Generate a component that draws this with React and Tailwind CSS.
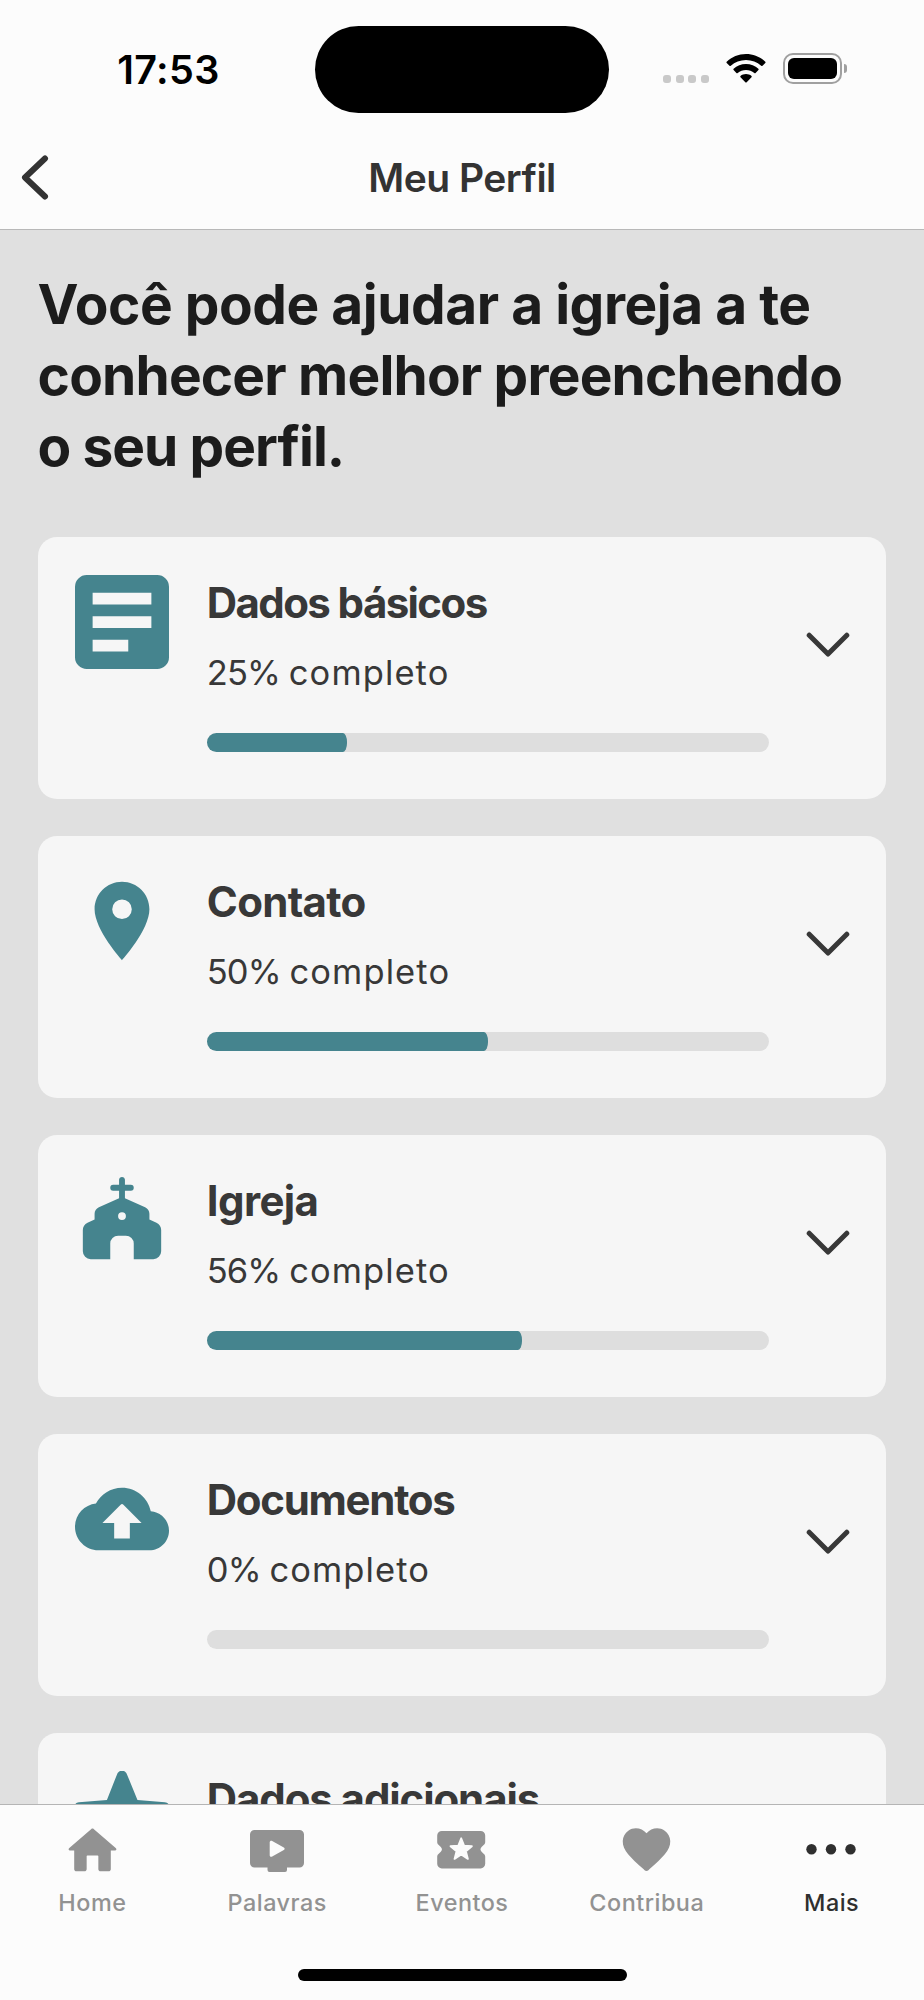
import React from "react";

const ArticleIcon = () => (
  <svg viewBox="0 0 24 24" className="w-[94px] h-[94px]" fill="currentColor">
    <path
      fillRule="evenodd"
      d="M3 0h18a3 3 0 0 1 3 3v18a3 3 0 0 1-3 3H3a3 3 0 0 1-3-3V3a3 3 0 0 1 3-3zM4.5 4.5v3h15v-3zM4.5 10.5v3h15v-3zM4.5 16.5v3h9.1v-3z"
    />
  </svg>
);

const PinIcon = () => (
  <svg viewBox="0 0 24 24" className="w-[94px] h-[94px]" fill="currentColor">
    <path d="M12 2C8.13 2 5 5.13 5 9c0 5.25 7 13 7 13s7-7.75 7-13c0-3.87-3.13-7-7-7zm0 9.5a2.5 2.5 0 0 1 0-5 2.5 2.5 0 0 1 0 5z" />
  </svg>
);

const ChurchIcon = () => (
  <svg viewBox="0 0 24 24" className="w-[94px] h-[94px]" fill="currentColor">
    <path
      fillRule="evenodd"
      d="M12 1c.42 0 .75.33.75.75V3h1.5a.75.75 0 0 1 0 1.5h-1.5v1.95l5.15 2.3c.7.32 1.1.93 1.1 1.65v1.5l1.8.82c.75.33 1.2 1.05 1.2 1.83V20a2 2 0 0 1-2 2h-5v-4a2 2 0 0 0-2-2h-2a2 2 0 0 0-2 2v4H4a2 2 0 0 1-2-2v-5.45c0-.78.45-1.5 1.2-1.83l1.8-.82v-1.5c0-.72.4-1.33 1.1-1.65l5.15-2.3V4.5h-1.5a.75.75 0 0 1 0-1.5h1.5V1.75c0-.42.33-.75.75-.75zM12 10a1 1 0 1 0 0 2 1 1 0 0 0 0-2z"
    />
  </svg>
);

const CloudIcon = () => (
  <svg viewBox="0 0 24 24" className="w-[94px] h-[94px]" fill="currentColor">
    <path d="M19.35 10.04C18.67 6.59 15.64 4 12 4 9.11 4 6.6 5.64 5.35 8.04 2.34 8.36 0 10.91 0 14c0 3.31 2.69 6 6 6h13c2.76 0 5-2.24 5-5 0-2.64-2.05-4.78-4.65-4.96zM14 13v4h-4v-4H7l4.65-4.65c.2-.2.51-.2.71 0L17 13h-3z" />
  </svg>
);

const StarIcon = () => (
  <svg viewBox="0 0 24 24" className="w-[94px] h-[94px]" fill="currentColor">
    <path d="M10.75.8c.5-1.2 2-1.2 2.5 0L15.95 7.4l7 .6c1.2.1 1.7 1.6.8 2.4l-5.4 4.7 1.6 7c.3 1.2-1 2.1-2 1.5L12 19.9l-6 3.7c-1 .6-2.3-.3-2-1.5l1.6-7-5.4-4.7c-.9-.8-.4-2.3.8-2.4l7.15-.6z" />
  </svg>
);

const HomeIcon = () => (
  <svg viewBox="0 0 24 24" className="w-[61px] h-[61px]" fill="currentColor">
    <path d="M9.7 19.4v-5.100c0-.2.1-.3.3-.3h4c.2 0 .3.1.3.3v5.1c0 .5.4.8.9.8h3.1c.5 0 .9-.3.9-.8V12h1.7c.46 0 .68-.57.33-.87L12.45 3.500c-.25-.24-.65-.24-.9 0L2.770 11.130c-.34.3-.13.87.33.87H4.800v7.400c0 .5.4.8.9.8h3.100c.5 0 .9-.3.9-.8z" />
  </svg>
);

const VideoIcon = () => (
  <svg viewBox="0.5 0 61 61" className="w-[61px] h-[61px]" fill="currentColor">
    <path
      fillRule="evenodd"
      d="M8 10h45a4.500 4.500 0 0 1 4.500 4.500v28.500a4.500 4.500 0 0 1-4.500 4.500H40.500v2.500a2 2 0 0 1-2 2H23a2 2 0 0 1-2-2v-2.500H8a4.500 4.500 0 0 1-4.500-4.500V14.500A4.500 4.500 0 0 1 8 10zM23.200 22.300v12.900c0 1.300 1.400 2 2.500 1.300l11.600-6.500c1.100-.7 1.100-1.900 0-2.500l-11.600-6.500c-1.100-.7-2.500 0-2.500 1.300z"
    />
  </svg>
);

const TicketIcon = () => (
  <svg viewBox="0 0 61 61" className="w-[61px] h-[61px]" fill="currentColor">
    <path d="M10.8 11h38.8a4.6 4.6 0 0 1 4.6 4.6v6.400c0 1.200-.4 2-1.300 2.800l-2.300 2.200c-1.500 1.600-1.500 3.200 0 4.800l2.300 2.200c.9.8 1.300 1.600 1.300 2.800v7a4.600 4.600 0 0 1-4.600 4.600H10.800a4.600 4.600 0 0 1-4.600-4.600v-7c0-1.200.4-2 1.300-2.800l2.300-2.200c1.500-1.600 1.500-3.200 0-4.800l-2.300-2.200c-.9-.8-1.300-1.600-1.300-2.800v-6.400a4.600 4.600 0 0 1 4.600-4.600z" />
    <path
      d="M30.200 18.300l2.900 7.400 7.800.5-6 5 2 7.700-6.700-4.300-6.700 4.300 2-7.700-6-5 7.800-.5z"
      fill="#fcfcfc"
      stroke="#fcfcfc"
      strokeWidth="1.800"
      strokeLinejoin="round"
    />
  </svg>
);

const HeartIcon = () => (
  <svg viewBox="0 0 24 24" className="w-[57px] h-[57px] mt-[1px]" fill="currentColor">
    <path d="M12.8 20.7c-.46.4-1.14.4-1.600 0l-.5-.5C5.300 15.400 1.870 12.260 2 8.380c.06-1.700.93-3.330 2.340-4.290 2.640-1.800 5.900-.96 7.660 1.100 1.760-2.060 5.020-2.910 7.660-1.100 1.410.96 2.280 2.590 2.340 4.290.14 3.880-3.300 6.990-8.700 11.820z" />
  </svg>
);

const MoreIcon = () => (
  <svg viewBox="0 0 61 61" className="w-[61px] h-[61px]" fill="currentColor">
    <circle cx="10.5" cy="29.3" r="5.2" />
    <circle cx="30" cy="29.3" r="5.2" />
    <circle cx="49.5" cy="29.3" r="5.2" />
  </svg>
);

const sections = [
  { title: "Dados básicos", percent: 25, icon: ArticleIcon, tracking: "tracking-[-1.6px]" },
  { title: "Contato", percent: 50, icon: PinIcon, tracking: "tracking-[-0.7px]" },
  { title: "Igreja", percent: 56, icon: ChurchIcon, tracking: "tracking-[-0.6px]" },
  { title: "Documentos", percent: 0, icon: CloudIcon, tracking: "tracking-[-1.3px]" },
  { title: "Dados adicionais", percent: 0, icon: StarIcon, tracking: "tracking-[-1.1px]" },
];

const tabs = [
  { label: "Home", icon: HomeIcon },
  { label: "Palavras", icon: VideoIcon },
  { label: "Eventos", icon: TicketIcon },
  { label: "Contribua", icon: HeartIcon },
  { label: "Mais", icon: MoreIcon, active: true },
];

function StatusBar() {
  return (
    <div className="h-[129px] flex items-start text-black">
      <div className="w-[315px] shrink-0 pt-[45px] pl-[22px] text-center text-[39.5px] leading-[50px] tracking-[0.4px] font-semibold">
        17:53
      </div>
      <div className="w-[294px] h-[87px] mt-[26px] shrink-0 rounded-full bg-black" />
      <div className="flex items-start pt-[53px] pl-[54px]">
        <div className="flex gap-[4.6px] mt-[22px]">
          {[0, 1, 2, 3].map((i) => (
            <span key={i} className="w-[8px] h-[8px] rounded-[3px] bg-[#c9c9c9]" />
          ))}
        </div>
        <svg viewBox="0 0 40 30" className="w-[40px] h-[30px] ml-[17px] mt-[1px]" fill="currentColor">
          <path d="M20 0c7.5 0 14.2 2.9 19.3 7.7.4.4.4.9 0 1.3l-2.8 2.8c-.4.4-.9.4-1.3 0C31.1 8.1 25.8 6 20 6S8.9 8.1 4.8 11.8c-.4.4-.9.4-1.3 0L.7 9c-.4-.4-.4-.9 0-1.3C5.8 2.9 12.5 0 20 0z" />
          <path d="M20 10c4.8 0 9.1 1.8 12.4 4.8.4.4.4.9 0 1.3l-2.8 2.8c-.4.4-.9.4-1.3 0C26 17 23.2 15.900 20 15.900S14 17 11.700 18.900c-.4.4-.9.4-1.300 0l-2.800-2.800c-.4-.4-.4-.9 0-1.300C10.900 11.800 15.200 10 20 10z" />
          <path d="M20 20c2.1 0 4 .7 5.5 1.9.4.4.4.9 0 1.3l-4.8 5c-.4.4-1 .4-1.4 0l-4.8-5c-.4-.4-.4-.9 0-1.3C16 20.700 17.900 20 20 20z" />
        </svg>
        <div className="ml-[17px] flex items-center">
          <div className="w-[59px] h-[31px] rounded-[10px] border-2 border-[#a0a0a0] p-[3px]">
            <div className="w-full h-full rounded-[6px] bg-black" />
          </div>
          <span className="w-[3px] h-[9px] ml-[2px] rounded-r-full bg-[#a0a0a0]" />
        </div>
      </div>
    </div>
  );
}

function NavBar() {
  return (
    <div className="h-[100px] grid grid-cols-[120px_1fr_120px] items-start">
      <svg viewBox="0 0 28 46" className="w-[28px] h-[46px] ml-[21px] mt-[26px]" fill="none" stroke="#333333" strokeWidth="6" strokeLinecap="round" strokeLinejoin="round">
        <path d="M24 3.5L4 22.5L24 41.5" />
      </svg>
      <h1 className="pt-[24px] text-center text-[39px] leading-[50px] tracking-[-0.5px] font-semibold text-[#333333]">
        Meu Perfil
      </h1>
    </div>
  );
}

function SectionCard({ title, percent, icon: Icon, tracking }) {
  return (
    <div className="h-[261.4px] shrink-0 flex rounded-[19px] bg-[#f6f6f6] pt-[37.6px] pl-[37.6px] text-[#383838]">
      <div className="w-[131.6px] shrink-0 text-[#45848e]">
        <Icon />
      </div>
      <div className="w-[562px] shrink-0">
        <h3 className={`pt-px text-[42px] leading-[54px] font-bold ${tracking}`}>{title}</h3>
        <p className="mt-[22px] text-[34.5px] leading-[42px]">
          <span className="tracking-[-0.9px]">{percent}% </span>
          <span className="tracking-[1.1px]">completo</span>
        </p>
        <div className="mt-[39px] h-[19px] rounded-full bg-[#dedede] overflow-hidden">
          <div className="h-full bg-[#45848e] rounded-r-[4px_9px]" style={{ width: `${percent}%` }} />
        </div>
      </div>
      <svg viewBox="0 0 44 26" className="w-[44px] h-[26px] ml-[37.2px] mt-[57px]" fill="none" stroke="#383838" strokeWidth="5" strokeLinecap="round" strokeLinejoin="round">
        <path d="M3.2 3.2L22 22L40.8 3.2" />
      </svg>
    </div>
  );
}

function TabBar() {
  return (
    <nav className="h-[196px] shrink-0 border-t border-[#b5b5b5] bg-[#fcfcfc] flex flex-col items-center">
      <div className="grid grid-cols-5 w-full h-[164px]">
        {tabs.map(({ label, icon: Icon, active }) => (
          <div
            key={label}
            className={`flex flex-col items-center pt-[15px] ${active ? "text-[#2f2f2f]" : "text-[#929292]"}`}
          >
            <div className="h-[61px]">
              <Icon />
            </div>
            <span className="mt-[7px] text-[23.4px] leading-[30px] tracking-[0.5px] font-medium">{label}</span>
          </div>
        ))}
      </div>
      <div className="w-[329px] h-[12px] rounded-full bg-black" />
    </nav>
  );
}

export default function App() {
  return (
    <div className="w-[924px] h-[2000px] flex flex-col overflow-hidden bg-[#e0e0e0] font-['Inter',sans-serif]">
      <header className="shrink-0 h-[230px] bg-[#fcfcfc] border-b border-[#b8b8b8]">
        <StatusBar />
        <NavBar />
      </header>

      <main className="flex-1 min-h-0 overflow-hidden px-[37.6px] pt-[38.6px]">
        <h2 className="text-[55px] leading-[71.3px] font-bold text-[#1c1c1c] whitespace-nowrap">
          <span className="block tracking-[-0.47px]">Você pode ajudar a igreja a te</span>
          <span className="block tracking-[-0.82px]">conhecer melhor preenchendo</span>
          <span className="block tracking-[-0.95px]">o seu perfil.</span>
        </h2>

        <div className="mt-[55px] flex flex-col gap-[37.5px]">
          {sections.map((section) => (
            <SectionCard key={section.title} {...section} />
          ))}
        </div>
      </main>

      <TabBar />
    </div>
  );
}
